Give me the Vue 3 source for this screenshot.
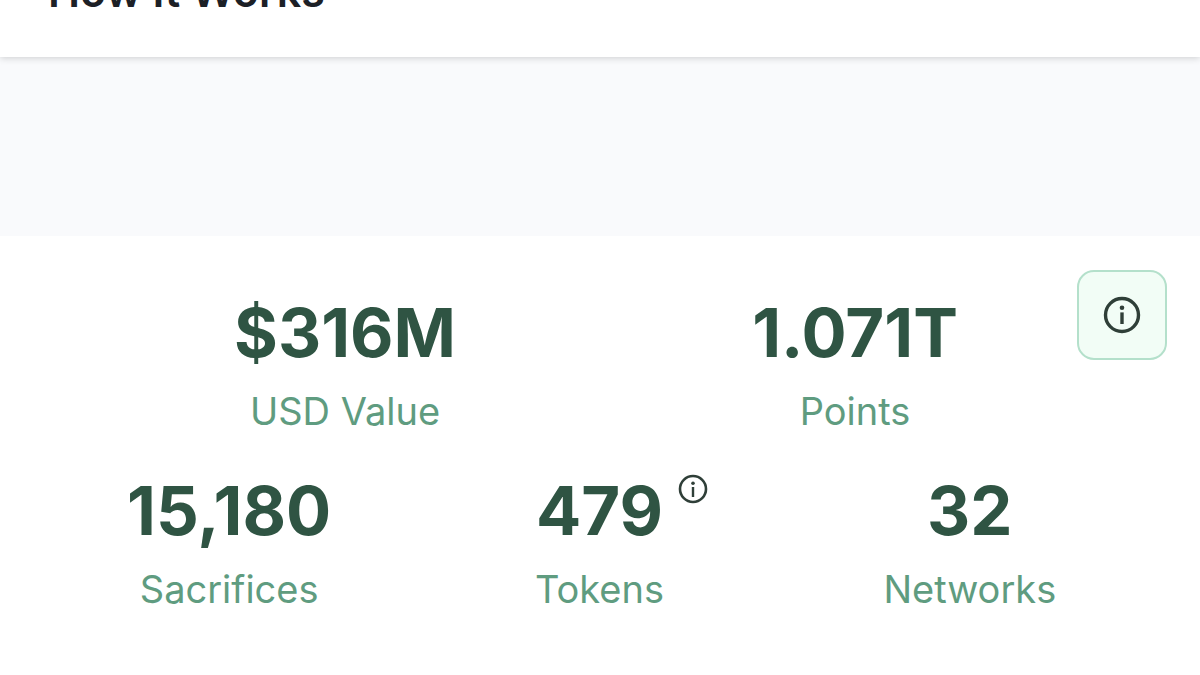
<template>
  <div class="page">
    <header class="top-bar">
      <h1 class="title">How It Works</h1>
    </header>
    <div class="spacer"></div>
    <section class="stats">
      <button class="info-button" aria-label="Info">
        <svg width="38" height="38" viewBox="0 0 38 38" fill="none">
          <circle cx="19" cy="19" r="16.5" stroke="#2f3f38" stroke-width="3.4" />
          <circle cx="19" cy="11.8" r="2.3" fill="#2f3f38" />
          <rect x="17.3" y="16.4" width="3.4" height="11.6" fill="#2f3f38" />
        </svg>
      </button>
      <div class="row row-top">
        <div v-for="stat in topStats" :key="stat.label" class="stat">
          <div class="value">{{ stat.value }}</div>
          <div class="label">{{ stat.label }}</div>
        </div>
      </div>
      <div class="row row-bottom">
        <div v-for="stat in bottomStats" :key="stat.label" class="stat">
          <div class="value">
            {{ stat.value }}
            <svg v-if="stat.hint" class="hint" width="30" height="30" viewBox="0 0 30 30" fill="none">
              <circle cx="15" cy="15" r="13" stroke="#2f3f38" stroke-width="2.6" />
              <circle cx="15" cy="9.2" r="1.8" fill="#2f3f38" />
              <rect x="13.8" y="13" width="2.4" height="10" fill="#2f3f38" />
            </svg>
          </div>
          <div class="label">{{ stat.label }}</div>
        </div>
      </div>
    </section>
  </div>
</template>

<script setup>
const topStats = [
  { value: '$316M', label: 'USD Value' },
  { value: '1.071T', label: 'Points' }
]

const bottomStats = [
  { value: '15,180', label: 'Sacrifices' },
  { value: '479', label: 'Tokens', hint: true },
  { value: '32', label: 'Networks' }
]
</script>

<style>
html,
body {
  margin: 0;
  overflow: hidden;
  background: #fff;
}
</style>

<style scoped>
.page {
  width: 1200px;
  height: 675px;
  overflow: hidden;
  font-family: Inter, "Liberation Sans", sans-serif;
  background: #fff;
}

.top-bar {
  position: relative;
  z-index: 1;
  height: 57px;
  display: flex;
  align-items: flex-end;
  padding: 0 48px 42px;
  box-sizing: border-box;
  background: #fff;
  box-shadow: 0 1px 7px rgba(0, 0, 0, 0.18);
}

.title {
  margin: 0;
  font-size: 43px;
  line-height: 48px;
  font-weight: 600;
  color: #1c2026;
  white-space: nowrap;
}

.spacer {
  height: 179px;
  background: #f9fafc;
}

.stats {
  position: relative;
  padding-top: 57px;
}

.info-button {
  position: absolute;
  top: 34px;
  left: 1077px;
  width: 90px;
  height: 90px;
  padding: 0;
  display: flex;
  align-items: center;
  justify-content: center;
  box-sizing: border-box;
  background: #f2fdf6;
  border: 2px solid #b4e0cb;
  border-radius: 17px;
}

.row {
  display: flex;
}

.row-top {
  margin-left: 90px;
  width: 1020px;
}

.row-bottom {
  margin-top: 38px;
  margin-left: 44px;
  width: 1111px;
}

.stat {
  flex: 1;
  display: flex;
  flex-direction: column;
  align-items: center;
}

.value {
  position: relative;
  font-size: 67px;
  line-height: 80px;
  font-weight: 700;
  color: #2f5443;
}

.label {
  margin-top: 16px;
  font-size: 38px;
  line-height: 44px;
  color: #5f9c80;
}

.hint {
  position: absolute;
  top: 3px;
  left: calc(100% + 15px);
}
</style>
